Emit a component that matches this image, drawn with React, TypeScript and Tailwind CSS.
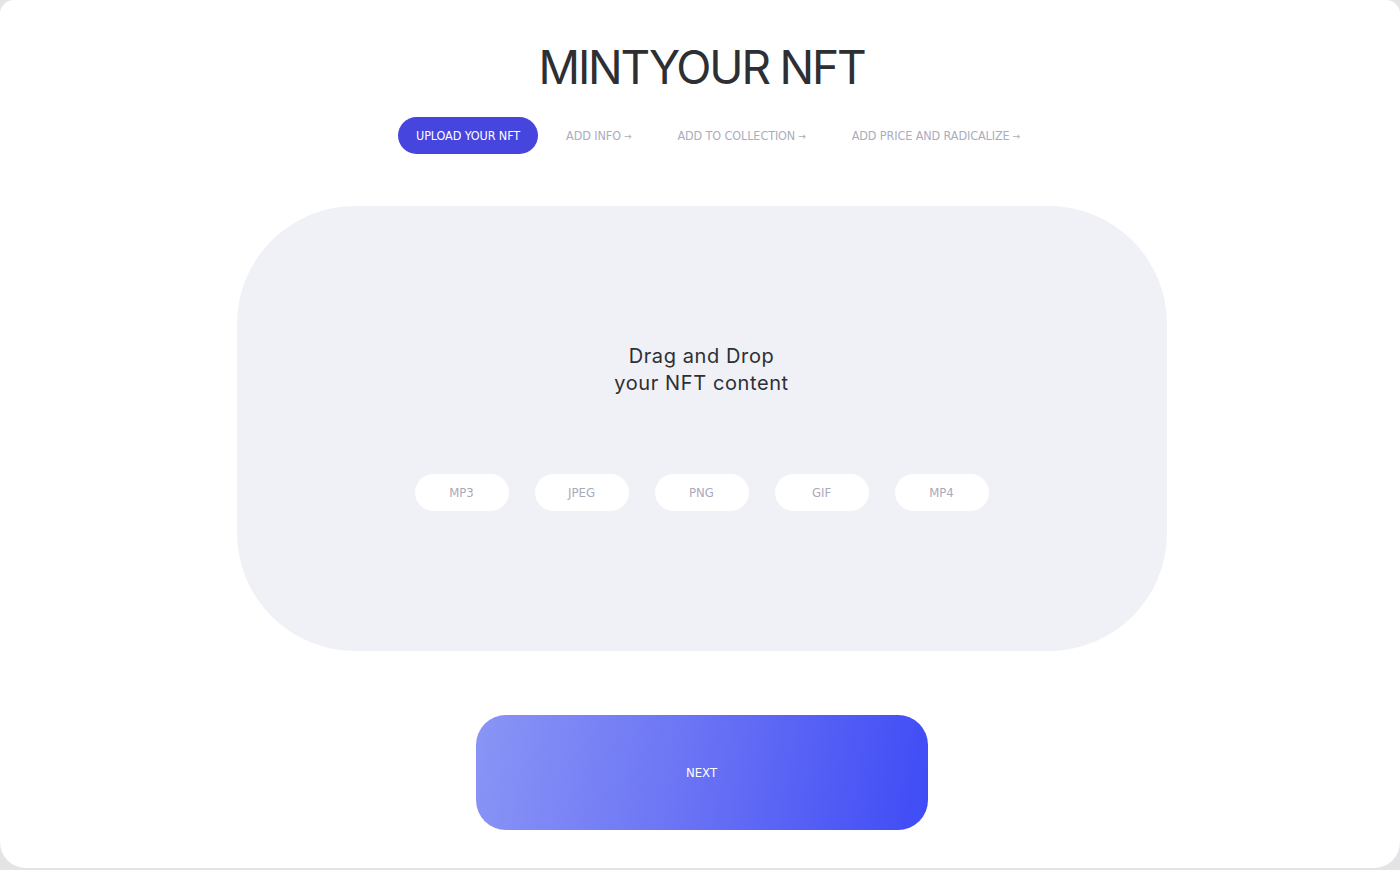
import React from "react";

const steps = ["ADD INFO", "ADD TO COLLECTION", "ADD PRICE AND RADICALIZE"];
const formats = ["MP3", "JPEG", "PNG", "GIF", "MP4"];

const cond = { fontFamily: '"DejaVu Sans Condensed", "Roboto Condensed", "Liberation Sans Narrow", Roboto, sans-serif' };

export default function App() {
  return (
    <div className="w-[1400px] h-[870px] bg-[#e4e4e6] overflow-hidden">
      <div
        className="w-[1400px] h-[868px] bg-white rounded-tl-[14px] rounded-tr-[14px] rounded-b-[26px] flex flex-col items-center pl-[3px]"
        style={{ fontFamily: 'Inter, "Open Sans", sans-serif' }}
      >
        <h1 className="mt-[41px] text-[46px] leading-[52px] text-[#2d2f33] font-normal tracking-[-2.2px]">
          MINTYOUR NFT
        </h1>
        <div className="mt-[24px] flex items-center gap-[10px] ml-[33px]" style={cond}>
          <div className="h-[37px] px-[18px] pt-[2px] rounded-full bg-[#4646de] text-white text-[12.5px] tracking-[-0.1px] flex items-center">
            UPLOAD YOUR NFT
          </div>
          {steps.map((s) => (
            <div key={s} className="h-[37px] px-[18px] pt-[2px] text-[#acacbd] text-[12.5px] tracking-[-0.1px] flex items-center gap-[3px]">
              <span>{s}</span>
              <span className="text-[10px]">→</span>
            </div>
          ))}
        </div>
        <div className="mt-[52px] w-[930px] h-[445px] rounded-[118px] bg-[#f0f1f7] flex flex-col items-center">
          <div className="mt-[137px] text-center text-[20px] leading-[27px] text-[#2d2f33] tracking-[0.6px]">
            <div>Drag and Drop</div>
            <div>your NFT content</div>
          </div>
          <div className="mt-[77px] flex gap-[26px]" style={cond}>
            {formats.map((f) => (
              <div
                key={f}
                className="w-[94px] h-[37px] pt-[1px] rounded-full bg-white text-[#a9a9ba] text-[13px] flex items-center justify-center"
              >
                {f}
              </div>
            ))}
          </div>
        </div>
        <button
          className="mt-[64px] w-[452px] h-[115px] rounded-[30px] bg-[linear-gradient(100deg,#8a95f6_0%,#6c75f4_45%,#3f4bf6_100%)] text-white text-[13px] flex items-center justify-center"
          style={cond}
        >
          NEXT
        </button>
      </div>
    </div>
  );
}
